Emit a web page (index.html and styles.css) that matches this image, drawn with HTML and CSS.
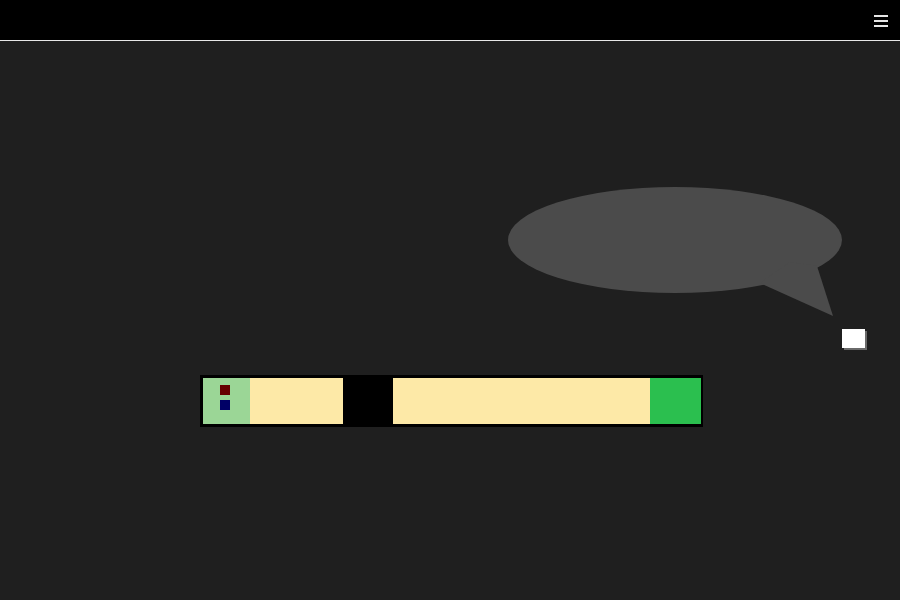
FILE: index.html
```html
<!DOCTYPE html>
<html>
<head>
<meta charset="utf-8">
<link rel="stylesheet" href="styles.css">
</head>
<body>
<header class="topbar">
  <button class="menu" aria-label="Menu"><span></span><span></span><span></span></button>
</header>
<main class="stage">
  <svg class="bubble" width="350" height="140" viewBox="500 180 350 140">
    <ellipse cx="675" cy="240" rx="167" ry="53" fill="#4b4b4b"/>
    <polygon points="760,283 833,316 817,266 790,262" fill="#4b4b4b"/>
  </svg>
  <div class="note"></div>
  <div class="bar">
    <div class="seg seg-a">
      <span class="dot dot-red"></span>
      <span class="dot dot-blue"></span>
    </div>
    <div class="seg seg-b"></div>
    <div class="seg seg-c"></div>
    <div class="seg seg-d"></div>
    <div class="seg seg-e"></div>
  </div>
</main>
</body>
</html>
```
FILE: styles.css
```css
html, body {
  margin: 0;
  padding: 0;
  background: #1f1f1f;
  font-family: "Liberation Sans", Arial, sans-serif;
}
body {
  width: 900px;
  height: 600px;
  overflow: hidden;
  position: relative;
}
.topbar {
  height: 40px;
  background: #000;
  border-bottom: 1px solid #e8e8e8;
  display: flex;
  justify-content: flex-end;
  align-items: center;
  padding-right: 12px;
}
.menu {
  background: none;
  border: 0;
  padding: 0;
  width: 14px;
  display: flex;
  flex-direction: column;
  gap: 3px;
  margin-top: 1px;
}
.menu span {
  display: block;
  height: 2px;
  background: #e6e6e6;
}
.stage {
  padding: 334px 0 0 200px;
}
.bubble {
  position: absolute;
  left: 500px;
  top: 180px;
}
.note {
  position: absolute;
  left: 842px;
  top: 329px;
  width: 23px;
  height: 19px;
  background: #fff;
  box-shadow: 2px 2px 0 #6a6a6a;
}
.bar {
  width: 498px;
  height: 46px;
  border-style: solid;
  border-color: #000;
  border-width: 3px 2px 3px 3px;
  display: flex;
}
.seg { height: 100%; }
.seg-a {
  width: 47px;
  background: #9bd696;
  display: flex;
  flex-direction: column;
  padding: 7px 0 0 17px;
  box-sizing: border-box;
  gap: 5px;
}
.seg-b { width: 93px; background: #fde9a7; }
.seg-c { width: 50px; background: #000; }
.seg-d { width: 257px; background: #fde9a7; }
.seg-e { width: 51px; background: #2bbf4f; }
.dot {
  display: block;
  width: 10px;
  height: 10px;
}
.dot-red { background: #660000; }
.dot-blue { background: #000066; }
```
